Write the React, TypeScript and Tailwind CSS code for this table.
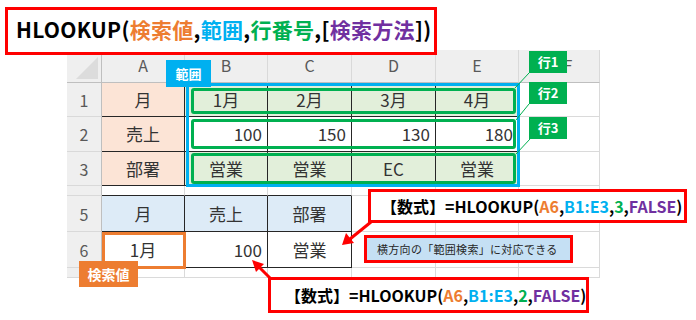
import React from 'react';

const FONT = { fontFamily: '"Noto Sans CJK JP", "Noto Sans", sans-serif' };

const cols = [35, 83, 83, 84, 84, 83, 81];
const rows = [33, 34, 35, 34, 10, 36, 36, 10];

type Cell = {
  text?: string;
  bg?: string;
  right?: boolean;
  dark?: boolean;
};

// body rows 1..7, columns A..F
const body: Record<number, Cell[]> = {
  1: [
    { text: '月', bg: 'bg-[#fce4d6]', dark: true },
    { text: '1月', bg: 'bg-[#e2efda]', dark: true },
    { text: '2月', bg: 'bg-[#e2efda]', dark: true },
    { text: '3月', bg: 'bg-[#e2efda]', dark: true },
    { text: '4月', bg: 'bg-[#e2efda]', dark: true },
    {},
  ],
  2: [
    { text: '売上', bg: 'bg-[#fce4d6]', dark: true },
    { text: '100', right: true, dark: true },
    { text: '150', right: true, dark: true },
    { text: '130', right: true, dark: true },
    { text: '180', right: true, dark: true },
    {},
  ],
  3: [
    { text: '部署', bg: 'bg-[#fce4d6]', dark: true },
    { text: '営業', bg: 'bg-[#e2efda]', dark: true },
    { text: '営業', bg: 'bg-[#e2efda]', dark: true },
    { text: 'EC', bg: 'bg-[#e2efda]', dark: true },
    { text: '営業', bg: 'bg-[#e2efda]', dark: true },
    {},
  ],
  4: [{ dark: true }, { dark: true }, { dark: true }, {}, {}, {}],
  5: [
    { text: '月', bg: 'bg-[#ddebf7]', dark: true },
    { text: '売上', bg: 'bg-[#ddebf7]', dark: true },
    { text: '部署', bg: 'bg-[#ddebf7]', dark: true },
    {},
    {},
    {},
  ],
  6: [
    { text: '1月', dark: true },
    { text: '100', right: true, dark: true },
    { text: '営業', dark: true },
    {},
    {},
    {},
  ],
  7: [{}, {}, {}, {}, {}, {}],
};

const Sheet: React.FC = () => {
  const cells: React.ReactNode[] = [];

  cells.push(
    <div key="corner" className="relative bg-[#efefef] border-r border-b border-[#bfbfbf]">
      <div className="absolute right-[3px] bottom-[3px] w-0 h-0 border-l-[22px] border-l-transparent border-b-[22px] border-b-[#dcdcdc]" />
    </div>
  );
  ['A', 'B', 'C', 'D', 'E', 'F'].map(l =>
    cells.push(
      <div
        key={`h-${l}`}
        className="bg-[#efefef] border-r border-b border-r-[#d9d9d9] border-b-[#bfbfbf] flex items-center justify-center text-[16px] text-[#595959] pb-[2px]"
      >
        {l === 'F' ? <span className="pl-[18px]">F</span> : l}
      </div>
    )
  );

  for (let r = 1; r <= 7; r++) {
    cells.push(
      <div
        key={`rh-${r}`}
        className="bg-[#efefef] border-r border-b border-r-[#bfbfbf] border-b-[#d9d9d9] flex items-center justify-center text-[16px] text-[#595959]"
      >
        {r === 4 || r === 7 ? '' : r}
      </div>
    );
    body[r].map((c, i) => {
      cells.push(
        <div
          key={`c-${r}-${i}`}
          className={`flex items-center text-[17px] text-[#333333] ${c.bg ?? 'bg-white'} ${
            c.right ? 'justify-end pr-[5px]' : 'justify-center'
          } ${
            c.dark
              ? r === 4
                ? 'border-r border-b border-r-[#d9d9d9] border-b-[#262626]'
                : 'border-r border-b border-[#262626]'
              : 'border-r border-b border-[#dadada]'
          }`}
        >
          {c.text}
        </div>
      );
    });
  }

  return (
    <div
      className="grid ml-[67px] -mt-[5px] w-[533px]"
      style={{
        gridTemplateColumns: cols.map(c => `${c}px`).join(' '),
        gridTemplateRows: rows.map(r => `${r}px`).join(' '),
      }}
    >
      {cells}
    </div>
  );
};

const Formula: React.FC<{ n: string }> = ({ n }) => (
  <span className="font-bold text-[16px] text-black whitespace-nowrap">
    【数式】=HLOOKUP(<span className="text-[#ed7d31]">A6</span>,
    <span className="text-[#00b0f0]">B1:E3</span>,<span className="text-[#00b050]">{n}</span>,
    <span className="text-[#7030a0]">FALSE</span>)
  </span>
);

const App: React.FC = () => {
  return (
    <div className="relative w-[696px] h-[320px] overflow-hidden bg-white" style={FONT}>
      {/* title */}
      <div className="relative z-10 ml-[5px] mt-[7px] w-[432px] h-[48px] border-[3px] border-[#ff0000] bg-white flex items-center pl-[8px] pb-[2px]">
        <span className="font-bold text-[21px] text-black whitespace-nowrap tracking-[0.3px]">
          HLOOKUP(<span className="text-[#ed7d31]">検索値</span>,<span className="text-[#00b0f0]">範囲</span>,
          <span className="text-[#00b050]">行番号</span>,[<span className="text-[#7030a0]">検索方法</span>])
        </span>
      </div>

      <Sheet />

      {/* range frame */}
      <div className="absolute left-[186px] top-[83px] w-[334px] h-[104px] border-[3px] border-[#00b0f0]" />
      {/* row frames */}
      <div className="absolute left-[191px] top-[88px] w-[325px] h-[26px] rounded-[3px] border-[3px] border-[#00b050]" />
      <div className="absolute left-[191px] top-[119px] w-[325px] h-[30px] rounded-[3px] border-[3px] border-[#00b050]" />
      <div className="absolute left-[191px] top-[153px] w-[325px] h-[31px] rounded-[3px] border-[3px] border-[#00b050]" />

      {/* lookup value frame */}
      <div className="absolute left-[102px] top-[232px] w-[84px] h-[37px] border-[3px] border-[#ed7d31]" />

      {/* labels */}
      <div className="absolute left-[166px] top-[60px] w-[45px] h-[27px] bg-[#00b0f0] text-white font-bold text-[13px] flex items-center justify-center">
        範囲
      </div>
      {['行1', '行2', '行3'].map((t, i) => (
        <div
          key={t}
          className={`absolute left-[529px] w-[38px] h-[22px] bg-[#00b050] text-white font-bold text-[13px] flex items-center justify-center ${
            i === 0 ? 'top-[51px]' : i === 1 ? 'top-[82px]' : 'top-[117px]'
          }`}
        >
          {t}
        </div>
      ))}
      <div className="absolute left-[79px] top-[261px] w-[59px] h-[26px] bg-[#ed7d31] text-white font-bold text-[14px] flex items-center justify-center">
        検索値
      </div>

      {/* formula 1 */}
      <div className="absolute left-[368px] top-[189px] w-[319px] h-[34px] border-[3px] border-[#ff0000] bg-white flex items-center pl-[10px]">
        <Formula n="3" />
      </div>
      {/* note */}
      <div className="absolute left-[364px] top-[235px] w-[209px] h-[28px] border-[3px] border-[#ff0000] bg-[#c5e0f4] flex items-center pl-[10px] text-[11px] tracking-[0.3px] text-[#262626] whitespace-nowrap">
        横方向の「範囲検索」に対応できる
      </div>
      {/* formula 2 */}
      <div className="absolute left-[268px] top-[277px] w-[321px] h-[36px] border-[3px] border-[#ff0000] bg-white flex items-center pl-[14px]">
        <Formula n="2" />
      </div>

      {/* connectors and arrows */}
      <svg className="absolute inset-0 pointer-events-none" width="696" height="320">
        <line x1="529" y1="73" x2="515" y2="88" stroke="#00b050" strokeWidth="1" />
        <line x1="529" y1="104" x2="516" y2="120" stroke="#00b050" strokeWidth="1" />
        <line x1="530" y1="139" x2="516" y2="154" stroke="#00b050" strokeWidth="1" />

        <line x1="371" y1="222" x2="350" y2="239" stroke="#ff0000" strokeWidth="3" />
        <polygon points="342,245 346,233 354,243" fill="#ff0000" />

        <line x1="271" y1="279" x2="258" y2="266" stroke="#ff0000" strokeWidth="3" />
        <polygon points="252,260 264,264 256,272" fill="#ff0000" />
      </svg>
    </div>
  );
};

export default App;
